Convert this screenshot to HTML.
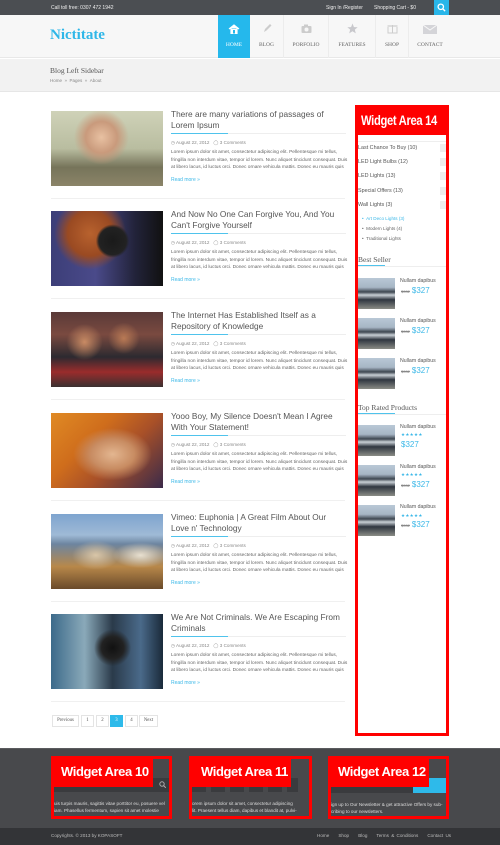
<!DOCTYPE html>
<html><head><meta charset="utf-8"><style>
*{margin:0;padding:0;box-sizing:border-box}
body{width:500px;height:845px;position:relative;background:#fff;font-family:"Liberation Sans",sans-serif;overflow:hidden;color:#555}
.a{position:absolute}
.top{left:0;top:0;width:500px;height:15px;background:#4b4e52;color:#eee;font-size:5px}
.hdr{left:0;top:15px;width:500px;height:43px;background:#f7f7f7;border-bottom:1px solid #e8e8e8}
.bc{left:0;top:59px;width:500px;height:33px;background:#f2f2f2;border-bottom:1px solid #e6e6e6}
.nav{top:15px;height:43px;font-family:"Liberation Serif",serif;font-size:5.5px;color:#666;text-align:center;border-right:1px solid #ececec}
.nav span{position:absolute;left:0;right:0;top:27px}
.img{left:51px;width:112px;height:75px}
.t{left:171px;width:175px;font-size:8.3px;line-height:10.5px;color:#555}
.ul{left:171px;width:175px;height:1px;background:#eee}
.ul i{display:block;width:57px;height:1px;background:#4fc3ec}
.meta{left:171px;font-size:4.6px;color:#888}
.p{left:171px;width:178px;font-size:4.8px;line-height:7.5px;color:#666}
.rm{left:171px;font-size:5px;color:#3bb8e8}
.sep{left:51px;width:294px;height:1px;background:#f0f0f0}
.cat{left:358px;font-size:5.4px;color:#555}
.tg{left:440px;width:6px;height:8px;background:#eee}
.sub{left:362px;font-size:4.6px;color:#666}
.sh{left:358px;font-family:"Liberation Serif",serif;font-size:7.5px;color:#555}
.pi{left:358px;width:37px;height:31px;background:linear-gradient(180deg,#b9c8d6 0,#a7b6c5 30%,#3d4650 45%,#c9d0d6 55%,#2f3640 70%,#8a8c86 100%)}
.pn{left:400px;font-size:5.2px;color:#555}
.pr{left:401px;font-size:8px;color:#3bb8e8}
.pr s{font-size:4px;color:#888;margin-right:2px}
.st{left:401px;font-size:4.5px;color:#3bb8e8;letter-spacing:.3px}
.pg{top:715px;height:12px;border:1px solid #e4e4e4;font-family:"Liberation Serif",serif;font-size:4.8px;color:#555;text-align:center;line-height:10px}
.fw{top:756px;height:63px;border:3px solid #f00}
.fl{background:#f00;color:#fff;font-family:"Liberation Sans",sans-serif;font-weight:bold;font-size:13px;letter-spacing:-.4px;line-height:25px;padding-left:8px;white-space:nowrap;overflow:hidden}
.fl b{display:inline-block;transform:scaleX(.85);transform-origin:left center}
.ft{font-size:4.6px;color:#ddd;line-height:6.5px}
.bl{top:833px;font-size:4.6px;color:#bbb}
</style></head><body>
<div class="a top">
 <div class="a" style="left:51px;top:5px">Call toll free: 0307 472 1942</div>
 <div class="a" style="left:326px;top:5px">Sign In /Register</div>
 <div class="a" style="left:374px;top:5px">Shopping Cart - $0</div>
 <div class="a" style="left:434px;top:0;width:15px;height:15px;background:#29b6e9"></div>
 <svg class="a" style="left:437px;top:3px" width="9" height="9" viewBox="0 0 10 10"><circle cx="4.2" cy="4.2" r="3" fill="none" stroke="#fff" stroke-width="1.4"/><path d="M6.4 6.4L9 9" stroke="#fff" stroke-width="1.5"/></svg>
</div>
<div class="a hdr">
 <div class="a" style="left:50px;top:12px;font-family:'Liberation Serif',serif;font-size:15px;font-weight:bold;color:#2fb7e8">Nictitate</div>
</div>
<div class="a nav" style="left:218px;width:32px;background:#25b8ec;color:#fff;border:none"><svg class="a" style="left:10px;top:9px" width="12" height="10" viewBox="0 0 12 10"><path d="M1 5L6 1L11 5M3 4.5V9.5H9V4.5" fill="#fff" stroke="#fff" stroke-width="1.2"/><rect x="5" y="6" width="2" height="3.5" fill="#25b8ec"/></svg><span>HOME</span></div>
<div class="a nav" style="left:250px;width:34px"><svg class="a" style="left:12px;top:8px" width="10" height="10"><path d="M2 9L3 6L8 1L9.5 2.5L4.5 7.5Z" fill="#ccc"/></svg><span>BLOG</span></div>
<div class="a nav" style="left:284px;width:45px"><svg class="a" style="left:17px;top:9px" width="11" height="9"><rect x="0.5" y="2" width="10" height="7" rx="1" fill="#ccc"/><rect x="3" y="0.5" width="4" height="2" fill="#ccc"/><circle cx="5.5" cy="5.5" r="2" fill="#f7f7f7"/></svg><span>PORFOLIO</span></div>
<div class="a nav" style="left:329px;width:47px"><svg class="a" style="left:18px;top:8px" width="11" height="11" viewBox="0 0 10 10"><path d="M5 0.5L6.3 3.7L9.7 3.9L7.1 6L8 9.4L5 7.5L2 9.4L2.9 6L0.3 3.9L3.7 3.7Z" fill="#c8c8cc"/></svg><span>FEATURES</span></div>
<div class="a nav" style="left:376px;width:33px"><svg class="a" style="left:11px;top:7px" width="11" height="12"><rect x="1" y="4" width="9" height="7" fill="none" stroke="#ccc"/><rect x="0.5" y="3" width="10" height="2" fill="#ddd"/><path d="M5.5 3V11" stroke="#ccc"/></svg><span>SHOP</span></div>
<div class="a nav" style="left:409px;width:42px;border:none"><svg class="a" style="left:14px;top:10px" width="14" height="9"><rect width="14" height="9" fill="#d4d4d8"/><path d="M0 0L7 5L14 0" fill="none" stroke="#f7f7f7"/></svg><span>CONTACT</span></div>
<div class="a bc">
 <div class="a" style="left:50px;top:7px;font-family:'Liberation Serif',serif;font-size:7.5px;color:#555">Blog Left Sidebar</div>
 <div class="a" style="left:50px;top:19px;font-size:4.5px;color:#888">Home &nbsp;» &nbsp;Pages &nbsp;» &nbsp;About</div>
</div>

<div class="a img" style="top:111px;background:radial-gradient(circle at 45% 35%,#e8c1a2 0,#c99a7c 20%,transparent 35%),linear-gradient(180deg,#cfd2b8 0,#b9bda0 50%,#76745a 75%,#8b8468 100%)"></div>
<div class="a img" style="top:211px;background:radial-gradient(circle at 55% 40%,#1a1a1a 0,#222 18%,transparent 22%),radial-gradient(circle at 35% 30%,#b8622e 0,#9a4a22 25%,transparent 40%),linear-gradient(90deg,#3c3e78 0,#4a4a8a 40%,#22233a 75%,#111 100%)"></div>
<div class="a img" style="top:312px;background:radial-gradient(circle at 30% 40%,#c98b64 0,transparent 20%),radial-gradient(circle at 65% 35%,#b97a55 0,transparent 18%),linear-gradient(180deg,#5a3a38 0,#7a4a40 30%,#2c2a30 60%,#9a2c2c 80%,#3a3030 100%)"></div>
<div class="a img" style="top:413px;background:radial-gradient(ellipse at 55% 55%,#e3b690 0,#c88c62 25%,transparent 45%),linear-gradient(135deg,#e08a24 0,#cf6d1c 35%,#a85028 60%,#3a2a4a 100%)"></div>
<div class="a img" style="top:514px;background:radial-gradient(ellipse at 40% 55%,#d9c6a8 0,transparent 25%),radial-gradient(ellipse at 80% 55%,#e8e0d0 0,transparent 22%),linear-gradient(180deg,#7ea4cf 0,#9fbad6 28%,#6d85a0 40%,#b8884a 70%,#6a4a2a 100%)"></div>
<div class="a img" style="top:614px;background:radial-gradient(circle at 55% 45%,#111 0,#222 15%,transparent 25%),linear-gradient(90deg,#3c6a8a 0,#8aa9b9 30%,#2a3a4a 55%,#4a6a8a 80%,#1a2a3a 100%)"></div>

<div class="a t" style="top:109px">There are many variations of passages of Lorem Ipsum</div>
<div class="a t" style="top:209px">And Now No One Can Forgive You, And You Can't Forgive Yourself</div>
<div class="a t" style="top:310px">The Internet Has Established Itself as a Repository of Knowledge</div>
<div class="a t" style="top:411px">Yooo Boy, My Silence Doesn't Mean I Agree With Your Statement!</div>
<div class="a t" style="top:512px">Vimeo: Euphonia | A Great Film About Our Love n' Technology</div>
<div class="a t" style="top:612px">We Are Not Criminals. We Are Escaping From Criminals</div>

<div id="rep"></div>
<script>
var tops=[111,211,312,413,514,614],h="";
tops.forEach(function(t,i){
h+='<div class="a ul" style="top:'+(t+22)+'px"><i></i></div>';
h+='<div class="a meta" style="top:'+(t+29)+'px">◷ August 22, 2012 &nbsp; ◯ 3 Comments</div>';
h+='<div class="a p" style="top:'+(t+38)+'px">Lorem ipsum dolor sit amet, consectetur adipiscing elit. Pellentesque mi tellus, fringilla non interdum vitae, tempor id lorem. Nunc aliquet tincidunt consequat. Duis at libero lacus, id luctus orci. Donec ornare vehicula mattis. Donec eu mauris quis</div>';
h+='<div class="a rm" style="top:'+(t+66)+'px">Read more »</div>';
if(i<5)h+='<div class="a sep" style="top:'+(t+87)+'px"></div>';
});
h+='<div class="a sep" style="top:701px"></div>';
document.getElementById('rep').innerHTML=h;
</script>

<div class="a pg" style="left:52px;width:27px">Previous</div>
<div class="a pg" style="left:81px;width:13px">1</div>
<div class="a pg" style="left:96px;width:13px">2</div>
<div class="a pg" style="left:110px;width:13px;background:#2ebaea;border-color:#2ebaea;color:#fff">3</div>
<div class="a pg" style="left:125px;width:13px">4</div>
<div class="a pg" style="left:139px;width:19px">Next</div>

<div class="a" style="left:355px;top:105px;width:94px;height:631px;border:3px solid #f00"></div>
<div class="a fl" style="left:355px;top:105px;width:94px;height:30px;line-height:30px;padding-left:6px;font-size:14px"><b style="transform:scaleX(.8)">Widget Area 14</b></div>
<div class="a" style="left:358px;top:141px;width:88px;height:1px;background:#eee"></div>
<div class="a cat" style="top:145px">Last Chance To Buy (10)</div><div class="a tg" style="top:144px"></div>
<div class="a cat" style="top:159px">LED Light Bulbs (12)</div><div class="a tg" style="top:158px"></div>
<div class="a cat" style="top:173px">LED Lights (13)</div><div class="a tg" style="top:172px"></div>
<div class="a cat" style="top:188px">Special Offers (13)</div><div class="a tg" style="top:187px"></div>
<div class="a cat" style="top:202px">Wall Lights (3)</div><div class="a tg" style="top:201px"></div>
<div class="a sub" style="top:216px;color:#3bb8e8">• &nbsp;Art Deco Lights (3)</div>
<div class="a sub" style="top:226px">• &nbsp;Modern Lights (4)</div>
<div class="a sub" style="top:236px">• &nbsp;Traditional Lights</div>
<div class="a sh" style="top:255px">Best Seller</div>
<div class="a" style="left:358px;top:266px;width:88px;height:1px;background:#eee"></div>
<div class="a" style="left:358px;top:265px;width:27px;height:1px;background:#4fc3ec"></div>
<div class="a pi" style="top:278px"></div><div class="a pn" style="top:278px">Nullam dapibus</div><div class="a pr" style="top:286px"><s>$332</s>$327</div>
<div class="a pi" style="top:318px"></div><div class="a pn" style="top:318px">Nullam dapibus</div><div class="a pr" style="top:326px"><s>$332</s>$327</div>
<div class="a pi" style="top:358px"></div><div class="a pn" style="top:358px">Nullam dapibus</div><div class="a pr" style="top:366px"><s>$332</s>$327</div>
<div class="a sh" style="top:403px">Top Rated Products</div>
<div class="a" style="left:358px;top:414px;width:88px;height:1px;background:#eee"></div>
<div class="a" style="left:358px;top:413px;width:37px;height:1px;background:#4fc3ec"></div>
<div class="a pi" style="top:425px"></div><div class="a pn" style="top:424px">Nullam dapibus</div><div class="a st" style="top:432px">★★★★★</div><div class="a pr" style="top:440px">$327</div>
<div class="a pi" style="top:465px"></div><div class="a pn" style="top:464px">Nullam dapibus</div><div class="a st" style="top:472px">★★★★★</div><div class="a pr" style="top:480px"><s>$332</s>$327</div>
<div class="a pi" style="top:505px"></div><div class="a pn" style="top:504px">Nullam dapibus</div><div class="a st" style="top:513px">★★★★★</div><div class="a pr" style="top:520px"><s>$332</s>$327</div>

<div class="a" style="left:0;top:748px;width:500px;height:80px;background:#48494c;border-top:1px solid #5a5b5e"></div>
<div class="a" style="left:0;top:828px;width:500px;height:17px;background:#333437"></div>
<div class="a" style="left:54px;top:778px;width:115px;height:14px;background:#3a3b3e"></div>
<svg class="a" style="left:159px;top:781px" width="7" height="7"><circle cx="3" cy="3" r="2.2" fill="none" stroke="#aaa"/><path d="M4.6 4.6L6.8 6.8" stroke="#aaa"/></svg>
<div class="a" style="left:192px;top:778px;width:106px;height:14px;background:repeating-linear-gradient(90deg,#3a3b3e 0,#3a3b3e 14px,transparent 14px,transparent 19px)"></div>
<div class="a" style="left:331px;top:778px;width:82px;height:15px;background:#3a3b3e"></div>
<div class="a" style="left:413px;top:778px;width:33px;height:15px;background:#2ebaea"></div>
<div class="a ft" style="left:54px;top:801px;width:115px;white-space:nowrap;overflow:hidden">uis turpis mauris, sagittis vitae porttitor eu, posuere vel<br>iam. Phasellus fermentum, sapien sit amet molestie</div>
<div class="a ft" style="left:192px;top:801px;width:117px;white-space:nowrap;overflow:hidden">orem ipsum dolor sit amet, consectetur adipiscing<br>lit. Praesent tellus diam, dapibus et blandit at, pulvi-</div>
<div class="a ft" style="left:331px;top:802px;width:115px;white-space:nowrap;overflow:hidden">ign up to Our Newsletter &amp; get attractive Offers by sub-<br>cribing to our newsletters.</div>
<div class="a fw" style="left:51px;width:121px"></div>
<div class="a fw" style="left:189px;width:123px"></div>
<div class="a fw" style="left:328px;width:121px"></div>
<div class="a fl" style="left:51px;top:756px;width:102px;height:31px;line-height:31px;padding-left:10px">Widget Area 10</div>
<div class="a fl" style="left:189px;top:756px;width:102px;height:31px;line-height:31px;padding-left:12px">Widget Area 11</div>
<div class="a fl" style="left:328px;top:756px;width:101px;height:31px;line-height:31px;padding-left:10px">Widget Area 12</div>
<div class="a bl" style="left:51px">Copyrights. © 2013 by KOPASOFT</div>
<div class="a bl" style="left:317px;word-spacing:1px">Home &nbsp;&nbsp; Shop &nbsp;&nbsp; Blog &nbsp;&nbsp; Terms &amp; Conditions &nbsp;&nbsp; Contact Us</div>
</body></html>
